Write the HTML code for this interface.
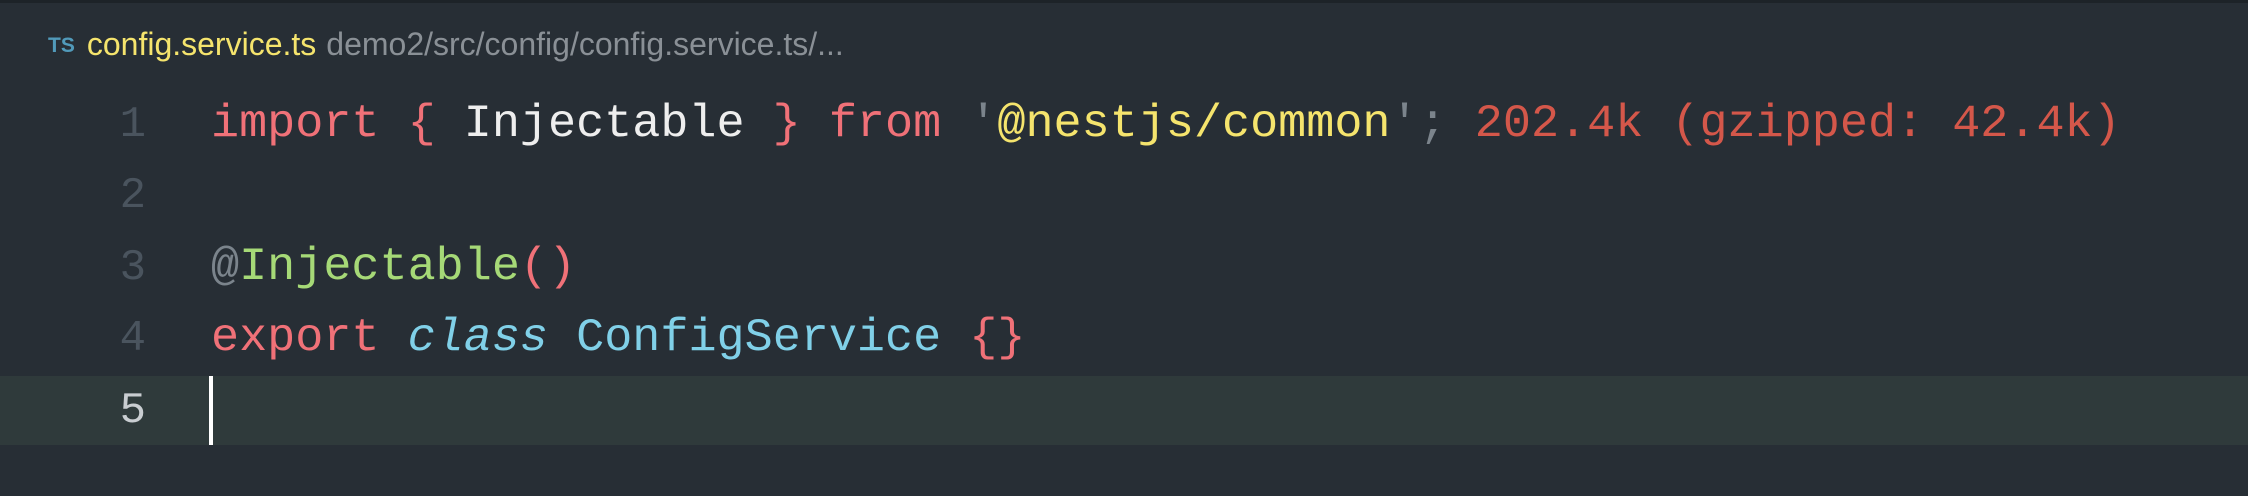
<!DOCTYPE html>
<html><head><style>
body{margin:0;width:2248px;height:496px;background:#272e35;overflow:hidden;position:relative;font-family:"Liberation Mono",monospace;}
.top{position:absolute;left:0;top:0;width:2248px;height:3px;background:#1d2328}
.bc{position:absolute;left:48px;top:25px;font-family:"Liberation Sans",sans-serif;font-size:32px;white-space:nowrap;line-height:38px}
.ts{color:#519aba;font-size:21px;font-weight:bold;vertical-align:3px;margin-right:12px}
.fn{color:#f5e46d}
.path{color:#8a9096;margin-left:10px}
.hl{position:absolute;left:0;top:376px;width:2248px;height:69px;background:#2f3a3b}
.cur{position:absolute;left:209px;top:376px;width:4px;height:69px;background:#ffffff}
.ln{position:absolute;left:100px;width:46px;text-align:right;font-size:44px;color:#4a545e}
.code{position:absolute;left:211px;font-size:46.8px;white-space:pre;color:#eeeeee}
.k{color:#f07178}.y{color:#f5e46d}.g{color:#a6d977}.c{color:#80d0e8}.s{color:#d4574a}.gr{color:#7b848c}
</style></head><body>
<div class="top"></div>
<div class="bc"><span class="ts">TS</span><span class="fn">config.service.ts</span><span class="path">demo2/src/config/config.service.ts/...</span></div>
<div class="hl"></div>
<div class="cur"></div>
<div class="ln" style="top:100px">1</div>
<div class="ln" style="top:171px">2</div>
<div class="ln" style="top:243px">3</div>
<div class="ln" style="top:314px">4</div>
<div class="ln" style="top:386px;color:#c9cdd1">5</div>
<div class="code" style="top:98px"><span class="k">import {</span> Injectable <span class="k">} from</span> <span class="gr">'</span><span class="y">@nestjs/common</span><span class="gr">';</span> <span class="s">202.4k (gzipped: 42.4k)</span></div>
<div class="code" style="top:241px"><span class="gr">@</span><span class="g">Injectable</span><span class="k">()</span></div>
<div class="code" style="top:312px"><span class="k">export</span> <span class="c" style="font-style:italic">class</span> <span class="c">ConfigService</span> <span class="k">{}</span></div>
</body></html>
